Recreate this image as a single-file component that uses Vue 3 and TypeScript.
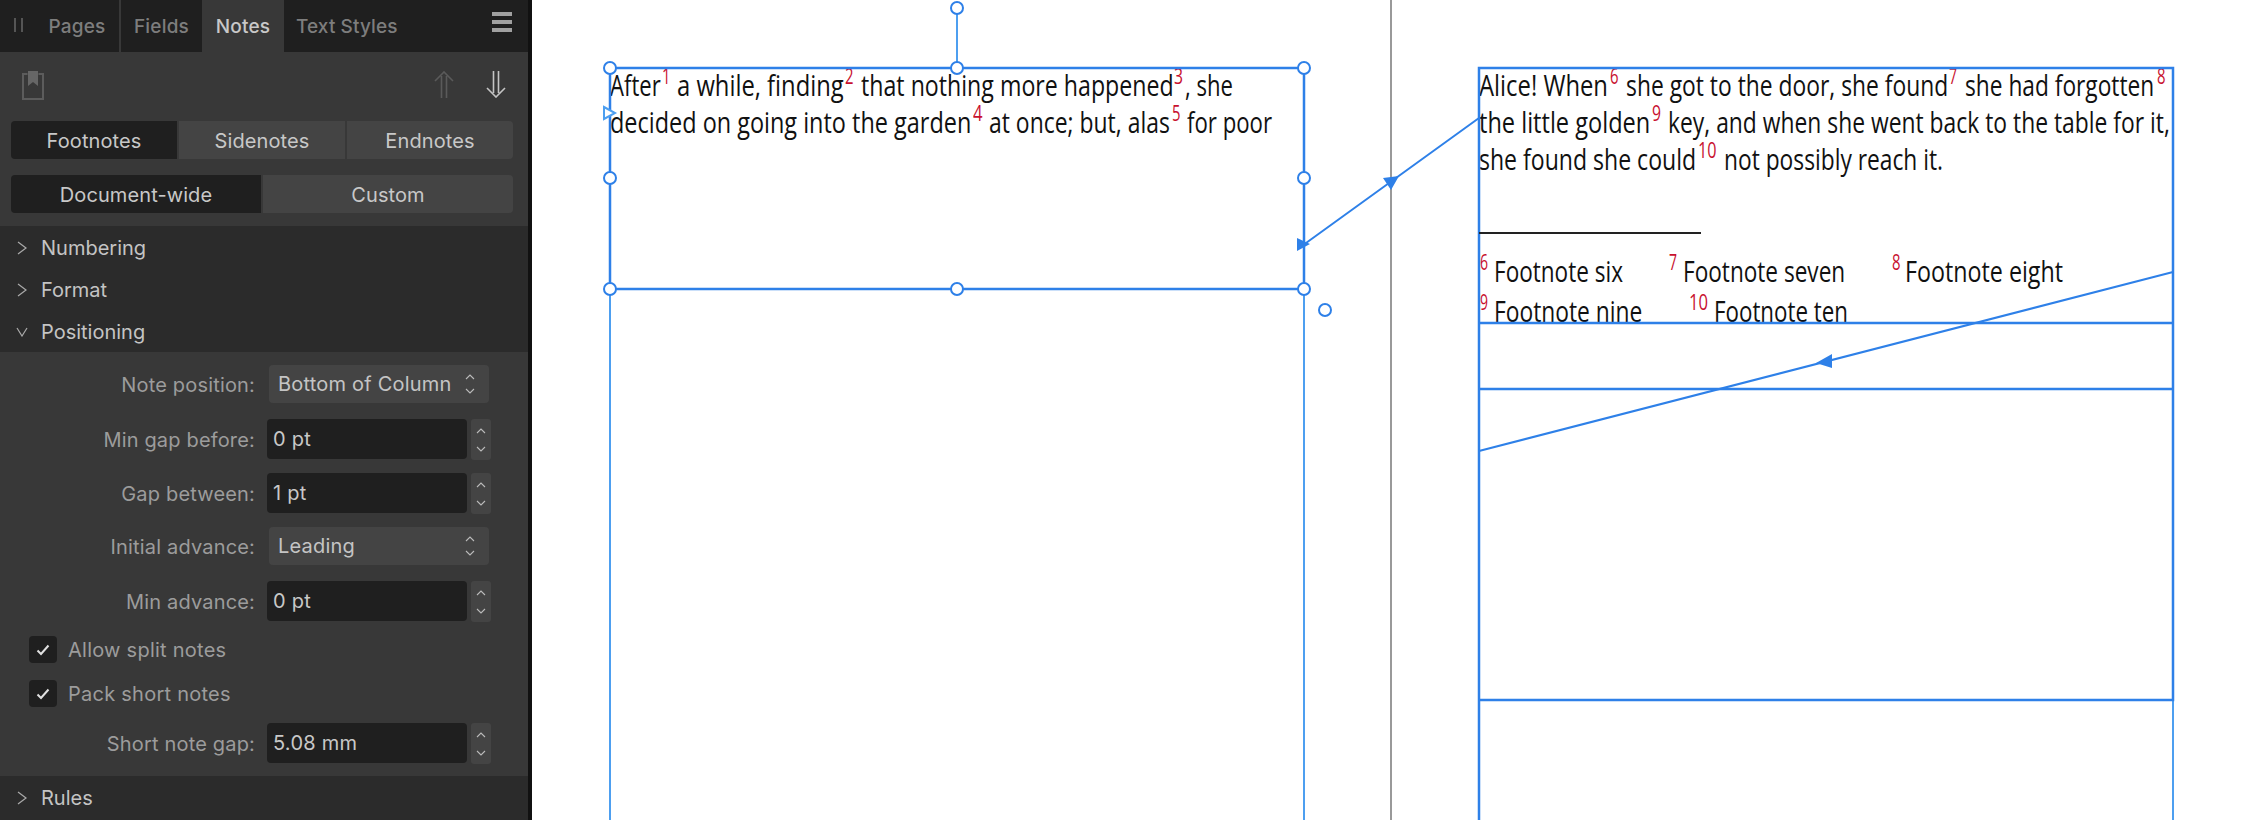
<script setup lang="ts">
import { onMounted, ref } from 'vue'

interface Run { x: number; base: number; end: number; t: string; sup?: boolean }

const tabs = ['Pages', 'Fields', 'Notes', 'Text Styles']
const OFFSET = 532

function run(base: number, x: number, end: number, t: string, sup = false): Run {
  return { x, base, end, t, sup }
}

const leftRuns: Run[] = [
  run(96, 610, 661, 'After'),
  run(96, 661.5, 670, '1', true),
  run(96, 677, 843.5, 'a while, finding'),
  run(96, 844.5, 853, '2', true),
  run(96, 860.5, 1173, 'that nothing more happened'),
  run(96, 1174, 1183, '3', true),
  run(96, 1185, 1233, ', she'),
  run(133, 610, 971.5, 'decided on going into the garden'),
  run(133, 972.5, 982, '4', true),
  run(133, 989, 1170, 'at once; but, alas'),
  run(133, 1172, 1180.5, '5', true),
  run(133, 1187, 1272, 'for poor'),
]

const rightRuns: Run[] = [
  run(96, 1479, 1608, 'Alice! When'),
  run(96, 1610, 1618.5, '6', true),
  run(96, 1626, 1948, 'she got to the door, she found'),
  run(96, 1949, 1957, '7', true),
  run(96, 1964.5, 2154, 'she had forgotten'),
  run(96, 2156.5, 2165, '8', true),
  run(133, 1479, 1650.5, 'the little golden'),
  run(133, 1652, 1661, '9', true),
  run(133, 1668, 2170, 'key, and when she went back to the table for it,'),
  run(170, 1479, 1696, 'she found she could'),
  run(170, 1697.5, 1716, '10', true),
  run(170, 1724, 1943, 'not possibly reach it.'),
  run(282, 1480, 1488, '6', true),
  run(282, 1494, 1623, 'Footnote six'),
  run(282, 1669, 1677, '7', true),
  run(282, 1683, 1845, 'Footnote seven'),
  run(282, 1892, 1900.5, '8', true),
  run(282, 1905, 2063, 'Footnote eight'),
  run(322, 1480, 1488, '9', true),
  run(322, 1494, 1642.5, 'Footnote nine'),
  run(322, 1689, 1708, '10', true),
  run(322, 1714, 1848, 'Footnote ten'),
]

const handles = [
  [957, 8], [610, 68], [957, 68], [1304, 68], [610, 178], [1304, 178], [610, 289], [957, 289], [1304, 289], [1325, 310],
]

// the canvas face is a condensed font we don't have, so squeeze each run to its measured width
const runEls = ref<HTMLElement[]>([])
onMounted(() => {
  for (const el of runEls.value) {
    const w = Number(el.dataset.w)
    el.style.transform = `scaleX(${w / el.offsetWidth})`
  }
})

function runStyle(r: Run) {
  return { left: r.x - OFFSET + 'px', top: r.base - (r.sup ? 38 : 29) + 'px' }
}
</script>

<template>
  <div class="app">
    <aside class="sidebar">
      <div class="tabbar">
        <div class="grip"><i></i><i></i></div>
        <div v-for="t in tabs" :key="t" class="tab" :class="{ active: t === 'Notes', first: t === 'Pages', wide: t === 'Text Styles' }">{{ t }}</div>
        <div class="burger"><i></i><i></i><i></i></div>
      </div>

      <div class="top">
        <div class="tools">
          <svg class="bookmark" width="22" height="29" viewBox="0 0 22 29">
            <path d="M5.500 3H1v25h20V3h-4.500" fill="none" stroke="#5c5c5c" stroke-width="2" />
            <path d="M6 0h10v15l-5-4-5 4z" fill="#666" />
          </svg>
          <svg class="arrow first" width="20" height="27" viewBox="0 0 20 27">
            <path d="M1 10 10 1l9 9M7.500 5v22M12.500 5v22" fill="none" stroke="#5a5a5a" stroke-width="1.600" />
          </svg>
          <svg class="arrow" width="20" height="27" viewBox="0 0 20 27">
            <path d="M1 17l9 9 9-9M7.500 0v22M12.500 0v22" fill="none" stroke="#c4c4c4" stroke-width="1.600" />
          </svg>
        </div>
        <div class="seg">
          <div class="on">Footnotes</div>
          <div>Sidenotes</div>
          <div>Endnotes</div>
        </div>
        <div class="seg second">
          <div class="on">Document-wide</div>
          <div>Custom</div>
        </div>
      </div>

      <div class="head"><svg width="10" height="14" viewBox="0 0 10 14"><path d="M1 1l8 6-8 6" /></svg>Numbering</div>
      <div class="head"><svg width="10" height="14" viewBox="0 0 10 14"><path d="M1 1l8 6-8 6" /></svg>Format</div>
      <div class="head"><svg class="open" width="12" height="10" viewBox="0 0 12 10"><path d="M1 1l5 8 5-8" /></svg>Positioning</div>

      <div class="form">
        <div class="row sel">
          <label>Note position:</label>
          <div class="dropdown">Bottom of Column
            <svg width="10" height="20" viewBox="0 0 10 20"><path d="M1 5l4-4 4 4M1 15l4 4 4-4" /></svg>
          </div>
        </div>
        <div class="row num">
          <label>Min gap before:</label>
          <div class="input">0 pt</div>
          <div class="stepper"><svg width="10" height="24" viewBox="0 0 10 24"><path d="M1 5l4-4 4 4M1 19l4 4 4-4" /></svg></div>
        </div>
        <div class="row num">
          <label>Gap between:</label>
          <div class="input">1 pt</div>
          <div class="stepper"><svg width="10" height="24" viewBox="0 0 10 24"><path d="M1 5l4-4 4 4M1 19l4 4 4-4" /></svg></div>
        </div>
        <div class="row sel">
          <label>Initial advance:</label>
          <div class="dropdown">Leading
            <svg width="10" height="20" viewBox="0 0 10 20"><path d="M1 5l4-4 4 4M1 15l4 4 4-4" /></svg>
          </div>
        </div>
        <div class="row num">
          <label>Min advance:</label>
          <div class="input">0 pt</div>
          <div class="stepper"><svg width="10" height="24" viewBox="0 0 10 24"><path d="M1 5l4-4 4 4M1 19l4 4 4-4" /></svg></div>
        </div>
        <div class="row chk">
          <span class="box"><svg width="14" height="12" viewBox="0 0 14 12"><path d="M1.500 6.500l3.500 3.500 7.500-8.500" /></svg></span>Allow split notes
        </div>
        <div class="row chk">
          <span class="box"><svg width="14" height="12" viewBox="0 0 14 12"><path d="M1.500 6.500l3.500 3.500 7.500-8.500" /></svg></span>Pack short notes
        </div>
        <div class="row num">
          <label>Short note gap:</label>
          <div class="input">5.08 mm</div>
          <div class="stepper"><svg width="10" height="24" viewBox="0 0 10 24"><path d="M1 5l4-4 4 4M1 19l4 4 4-4" /></svg></div>
        </div>
      </div>

      <div class="head"><svg width="10" height="14" viewBox="0 0 10 14"><path d="M1 1l8 6-8 6" /></svg>Rules</div>
    </aside>

    <main class="canvas">
      <div v-for="r in leftRuns" :key="r.x" ref="runEls" class="run" :class="{ sup: r.sup }" :data-w="r.end - r.x" :style="runStyle(r)">{{ r.t }}</div>
      <div class="clip">
        <div v-for="r in rightRuns" :key="r.x + '-' + r.base" ref="runEls" class="run" :class="{ sup: r.sup }" :data-w="r.end - r.x" :style="runStyle(r)">{{ r.t }}</div>
      </div>

      <svg class="overlay" width="1722" height="820" viewBox="532 0 1722 820">
        <path class="soft" d="M957 14V62M610 289V820M1304 289V820M2173 700V820" />
        <path class="gray" d="M1391 0V820" />
        <path class="frame" d="M610 68H1304V289H610ZM1479 820V68H2173V700H1479M1479 323H2173M1479 389H2173" />
        <rect class="rule" x="1479" y="232" width="222" height="2" />
        <path class="link" d="M1306 243 1479 118M2173 272 1479 451" />
        <path class="tri" d="M1383 178 1399 176 1391 190ZM1297 238 1310 244 1297 251ZM1816 363 1832 354 1832 368Z" />
        <path class="hollow" d="M604 107 615 113 604 119Z" />
        <circle v-for="h in handles" :key="h[0] + '-' + h[1]" class="handle" :cx="h[0]" :cy="h[1]" r="6" />
      </svg>
    </main>
  </div>
</template>

<style scoped>
.app {
  display: flex;
  width: 2254px;
  height: 820px;
  overflow: hidden;
  font-family: Inter, "Noto Sans", sans-serif;
}

.sidebar {
  width: 528px;
  height: 820px;
  flex: none;
  background: #2b2b2b;
  border-right: 4px solid #111;
  font-size: 20px;
  color: #c8c8c8;
  overflow: hidden;
}

.tabbar {
  display: flex;
  height: 52px;
  background: #1f1f1f;
  align-items: stretch;
  position: relative;
  font-size: 19px;
}

.grip {
  display: flex;
  gap: 5px;
  width: 35px;
  padding: 18px 0 0 14px;
  box-sizing: border-box;
}

.grip i {
  width: 2px;
  height: 14px;
  background: #555;
}

.tab {
  display: flex;
  align-items: center;
  justify-content: center;
  width: 81px;
  color: #7d7d7d;
  font-weight: 500;
  letter-spacing: 0.2px;
  white-space: nowrap;
}

.tab.first {
  width: 84px;
  border-right: 2px solid #383838;
}

.tab.active {
  width: 82px;
  background: #383838;
  color: #c8c8c8;
}

.tab.wide {
  width: auto;
  padding-left: 12px;
  letter-spacing: 0.1px;
}

.burger {
  position: absolute;
  left: 492px;
  top: 12px;
  display: flex;
  flex-direction: column;
  gap: 4px;
}

.burger i {
  width: 20px;
  height: 4px;
  background: #a0a0a0;
}

.top {
  height: 174px;
  background: #383838;
  padding: 0 15px 0 11px;
}

.tools {
  display: flex;
  align-items: flex-start;
  height: 69px;
  padding: 19px 7px 0 11px;
  box-sizing: border-box;
}

.arrow.first {
  margin-left: auto;
  margin-right: 32px;
}

.seg {
  display: flex;
  gap: 2px;
  height: 38px;
}

.seg.second {
  margin-top: 16px;
}

.seg div {
  flex: 1;
  display: flex;
  align-items: center;
  justify-content: center;
  padding-top: 1px;
  background: #444;
  color: #c8c8c8;
  letter-spacing: 0.1px;
}

.seg div:first-child {
  border-radius: 4px 0 0 4px;
}

.seg div:last-child {
  border-radius: 0 4px 4px 0;
}

.seg .on {
  background: #1f1f1f;
}

.head {
  display: flex;
  align-items: center;
  box-sizing: border-box;
  height: 42px;
  padding: 1px 0 0 17px;
  color: #c4c4c4;
}

.head svg {
  width: 10px;
  margin-right: 14px;
  fill: none;
  stroke: #aaa;
  stroke-width: 1.200;
}

.head svg.open {
  width: 12px;
  margin-left: -1px;
  margin-right: 13px;
}

.form {
  background: #383838;
  height: 424px;
  padding-top: 13px;
  box-sizing: border-box;
  display: flex;
  flex-direction: column;
}

.row {
  display: flex;
  align-items: flex-start;
  color: #9c9c9c;
  letter-spacing: 0.25px;
}

.row label {
  width: 255px;
  text-align: right;
  flex: none;
  line-height: 40px;
  letter-spacing: 0.17px;
}

.sel {
  height: 38px;
  margin-top: 14px;
}

.form .sel:first-child {
  margin-top: 0;
}

.num {
  height: 40px;
  margin-top: 14px;
}

.num label {
  line-height: 42px;
}

.sel + .num {
  margin-top: 16px;
}

.dropdown {
  display: flex;
  align-items: center;
  justify-content: space-between;
  box-sizing: border-box;
  width: 220px;
  height: 38px;
  margin-left: 14px;
  padding: 0 14px 0 9px;
  background: #444;
  border-radius: 4px;
  color: #c4c4c4;
  white-space: nowrap;
  letter-spacing: 0.2px;
}

.dropdown svg,
.stepper svg {
  fill: none;
  stroke: #bbb;
  stroke-width: 1.100;
}

.input {
  box-sizing: border-box;
  width: 200px;
  height: 40px;
  margin-left: 12px;
  padding-left: 6px;
  line-height: 40px;
  background: #1f1f1f;
  border-radius: 4px;
  color: #c8c8c8;
}

.stepper {
  display: flex;
  align-items: center;
  justify-content: center;
  width: 20px;
  height: 41px;
  margin-left: 4px;
  background: #444;
  border-radius: 3px;
}

.chk {
  align-items: center;
  height: 27px;
  margin-top: 15px;
  padding-left: 29px;
}

.chk + .chk {
  margin-top: 17px;
}

.chk + .num {
  margin-top: 16px;
}

.box {
  display: flex;
  align-items: center;
  justify-content: center;
  width: 28px;
  height: 27px;
  margin-right: 11px;
  background: #1f1f1f;
  border-radius: 4px;
}

.box svg {
  fill: none;
  stroke: #e0e0e0;
  stroke-width: 2;
}

.canvas {
  position: relative;
  flex: 1;
  height: 820px;
  background: #fff;
  overflow: hidden;
}

.clip {
  position: absolute;
  left: 0;
  top: 0;
  width: 100%;
  height: 323px;
  overflow: hidden;
}

.run {
  position: absolute;
  white-space: pre;
  font-family: "Open Sans", Lato, sans-serif;
  font-size: 29px;
  line-height: 36px;
  color: #111;
  transform-origin: left top;
}

.run.sup {
  font-size: 21px;
  color: #c8102e;
}

.overlay {
  position: absolute;
  left: 0;
  top: 0;
}

.overlay path {
  fill: none;
}

.overlay .soft {
  stroke: #4d9ff0;
  stroke-width: 2;
}

.overlay .gray {
  stroke: #999;
  stroke-width: 2;
}

.overlay .frame {
  stroke: #2e80e8;
  stroke-width: 2.500;
}

.overlay .link {
  stroke: #2e80e8;
  stroke-width: 2;
}

.overlay .tri {
  fill: #2e80e8;
}

.overlay .hollow {
  fill: #fff;
  stroke: #4d9ff0;
  stroke-width: 2;
}

.rule {
  fill: #222;
}

.handle {
  fill: #fff;
  stroke: #2e80e8;
  stroke-width: 2;
}
</style>

<style>
html,
body {
  margin: 0;
  background: #fff;
}
</style>
